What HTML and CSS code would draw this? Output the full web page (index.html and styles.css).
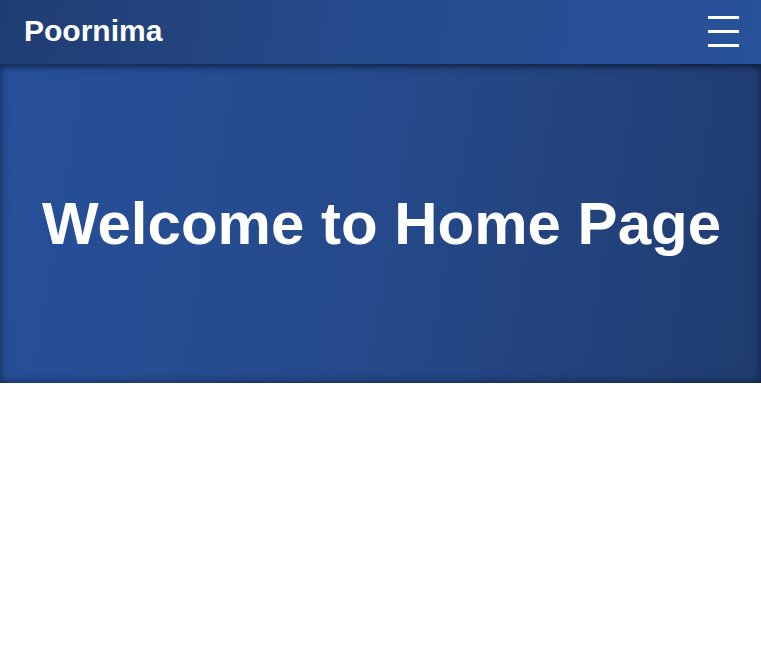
FILE: index.html
```html
<!DOCTYPE html>
<html lang="en">
<head>
<meta charset="utf-8">
<title>Poornima</title>
<link rel="stylesheet" href="styles.css">
</head>
<body>
<header class="navbar">
  <div class="brand">Poornima</div>
  <button class="menu-toggle" aria-label="Menu">
    <span class="bar"></span>
    <span class="bar"></span>
    <span class="bar"></span>
  </button>
</header>
<section class="hero">
  <h1 class="hero-title">Welcome to Home Page</h1>
</section>
</body>
</html>
```
FILE: styles.css
```css
* { box-sizing: border-box; }
html, body { margin: 0; padding: 0; background: #fff; }
body { font-family: "Liberation Sans", Arial, sans-serif; }

.navbar {
  position: relative;
  z-index: 2;
  height: 64px;
  display: flex;
  align-items: center;
  justify-content: space-between;
  padding: 0 22px 0 24px;
  background: linear-gradient(100deg, #203d72 0%, #264c90 55%, #28529a 100%);
  box-shadow: 0 2px 6px rgba(0, 0, 0, 0.35);
}

.brand {
  color: #fff;
  font-weight: bold;
  font-size: 30px;
  line-height: 1;
  margin-top: -2px;
}

.menu-toggle {
  background: none;
  border: 0;
  padding: 0;
  width: 31px;
  height: 31px;
  display: flex;
  flex-direction: column;
  justify-content: space-between;
  margin-top: -1px;
}

.menu-toggle .bar {
  display: block;
  width: 31px;
  height: 3px;
  background: #fff;
}

.hero {
  height: 319px;
  display: flex;
  align-items: center;
  justify-content: center;
  background: linear-gradient(100deg, #27509a 0%, #25498a 50%, #203c70 100%);
  box-shadow: inset 0 0 10px rgba(0, 0, 0, 0.5);
}

.hero-title {
  margin: 0;
  color: #fff;
  font-weight: bold;
  font-size: 60px;
  line-height: 1;
  padding-left: 2px;
}
```
